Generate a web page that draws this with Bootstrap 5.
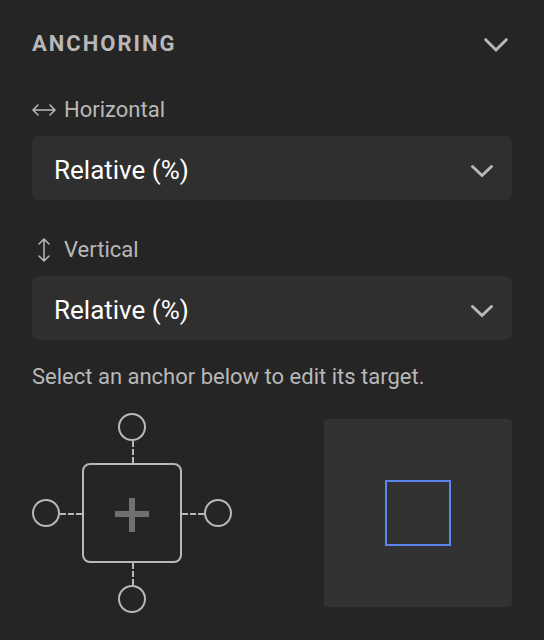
<!DOCTYPE html>
<html lang="en" data-bs-theme="dark">
<head>
<meta charset="utf-8">
<meta name="viewport" content="width=device-width, initial-scale=1">
<title>Anchoring</title>
<link href="https://cdn.jsdelivr.net/npm/bootstrap@5.3.0/dist/css/bootstrap.min.css" rel="stylesheet">
<style>
:root { --panel: #252525; --field: #2f2f2f; --preview: #323232; --ink: #b8b8b8; }
body { background: var(--panel); color: var(--ink); font-family: Roboto, "Liberation Sans", sans-serif; font-size: 22px; line-height: 28px; }
.panel { padding: 28px 32px; }
.panel-head { margin-bottom: 36px; }
.panel-title { color: var(--ink); font-size: 22px; line-height: 32px; font-weight: 700; letter-spacing: 2px; }
.panel svg { display: block; fill: none; stroke: currentColor; }
.panel-toggle { color: var(--ink); }
.field-label { margin-bottom: 12px; }
.field-box { position: relative; margin-bottom: 36px; }
.field-box .form-select { height: 64px; padding: 4px 64px 0 22px; border: 0; border-radius: 8px; background: var(--field); color: #fff; font-size: 26px; line-height: 32px; }
.field-box svg { position: absolute; right: 18px; top: 28px; pointer-events: none; }
.hint { line-height: 26px; margin-bottom: 23px; }
.anchor-map { display: grid; grid-template-columns: 28px 22px 100px 22px 28px; grid-template-rows: 28px 22px 100px 22px 28px; place-items: center; }
.anchor-map button { padding: 0; background: none; border: 2px solid var(--ink); color: #707070; }
.anchor-dot { width: 28px; height: 28px; border-radius: 50%; }
.anchor-center { width: 100px; height: 100px; border-radius: 8px; }
.anchor-top, .anchor-bottom, .link-top, .link-bottom { grid-column: 3; }
.anchor-left, .anchor-right, .anchor-center, .link-left, .link-right { grid-row: 3; }
.anchor-top { grid-row: 1; } .link-top { grid-row: 2; } .link-bottom { grid-row: 4; } .anchor-bottom { grid-row: 5; }
.anchor-left { grid-column: 1; } .link-left { grid-column: 2; } .anchor-center { grid-column: 3; } .link-right { grid-column: 4; } .anchor-right { grid-column: 5; }
.preview { width: 188px; height: 188px; border-radius: 4px; background: var(--preview); }
.preview-shape { width: 66px; height: 66px; border: 2px solid #5c85f0; }
</style>
</head>
<body>
<main class="panel">
  <header class="panel-head d-flex justify-content-between align-items-center">
    <h1 class="panel-title text-uppercase m-0">Anchoring</h1>
    <button type="button" class="panel-toggle btn p-0 border-0" aria-label="Collapse anchoring">
      <svg width="32" height="32" viewBox="0 0 32 32" stroke-width="3" stroke-linecap="round"><path d="M5.7 11.7L16 22l10.300-10.300"/></svg>
    </button>
  </header>
  <label class="field-label d-flex align-items-center gap-2" for="horizontal">
    <svg width="24" height="24" viewBox="0 0 24 24" stroke-width="1.5" stroke-linecap="round"><path d="M1 12h22M6 7l-5 5 5 5M18 7l5 5-5 5"/></svg>
    Horizontal
  </label>
  <div class="field-box">
    <select id="horizontal" class="form-select"><option>Relative (%)</option><option>Fixed (px)</option></select>
    <svg width="24" height="16" viewBox="0 0 24 16" stroke-width="3" stroke-linecap="round"><path d="M2.500 2.500L12 11.500l9.500-9"/></svg>
  </div>
  <label class="field-label d-flex align-items-center gap-2" for="vertical">
    <svg width="24" height="24" viewBox="0 0 24 24" stroke-width="1.5" stroke-linecap="round"><path d="M12 1v22M7 6l5-5 5 5M7 18l5 5 5-5"/></svg>
    Vertical
  </label>
  <div class="field-box mb-4">
    <select id="vertical" class="form-select"><option>Relative (%)</option><option>Fixed (px)</option></select>
    <svg width="24" height="16" viewBox="0 0 24 16" stroke-width="3" stroke-linecap="round"><path d="M2.500 2.500L12 11.500l9.500-9"/></svg>
  </div>
  <p class="hint">Select an anchor below to edit its target.</p>
  <div class="d-flex justify-content-between align-items-center">
    <div class="anchor-map">
      <button type="button" class="anchor-dot anchor-top" aria-label="Top anchor"></button>
      <svg class="link-top" width="4" height="22" viewBox="0 0 4 22" stroke-width="2" stroke-dasharray="6 2"><path d="M3 0v22"/></svg>
      <button type="button" class="anchor-dot anchor-left" aria-label="Left anchor"></button>
      <svg class="link-left" width="22" height="4" viewBox="0 0 22 4" stroke-width="2" stroke-dasharray="6 2"><path d="M0 3h22"/></svg>
      <button type="button" class="anchor-center d-flex align-items-center justify-content-center" aria-label="Center anchor">
        <svg width="40" height="40" viewBox="0 0 40 40" stroke-width="6"><path d="M3 21h34M20 5v34"/></svg>
      </button>
      <svg class="link-right" width="22" height="4" viewBox="0 0 22 4" stroke-width="2" stroke-dasharray="6 2"><path d="M0 3h22"/></svg>
      <button type="button" class="anchor-dot anchor-right" aria-label="Right anchor"></button>
      <svg class="link-bottom" width="4" height="22" viewBox="0 0 4 22" stroke-width="2" stroke-dasharray="6 2"><path d="M3 0v22"/></svg>
      <button type="button" class="anchor-dot anchor-bottom" aria-label="Bottom anchor"></button>
    </div>
    <div class="preview d-flex align-items-center justify-content-center"><div class="preview-shape"></div></div>
  </div>
</main>
<script src="https://cdn.jsdelivr.net/npm/bootstrap@5.3.0/dist/js/bootstrap.bundle.min.js"></script>
</body>
</html>
